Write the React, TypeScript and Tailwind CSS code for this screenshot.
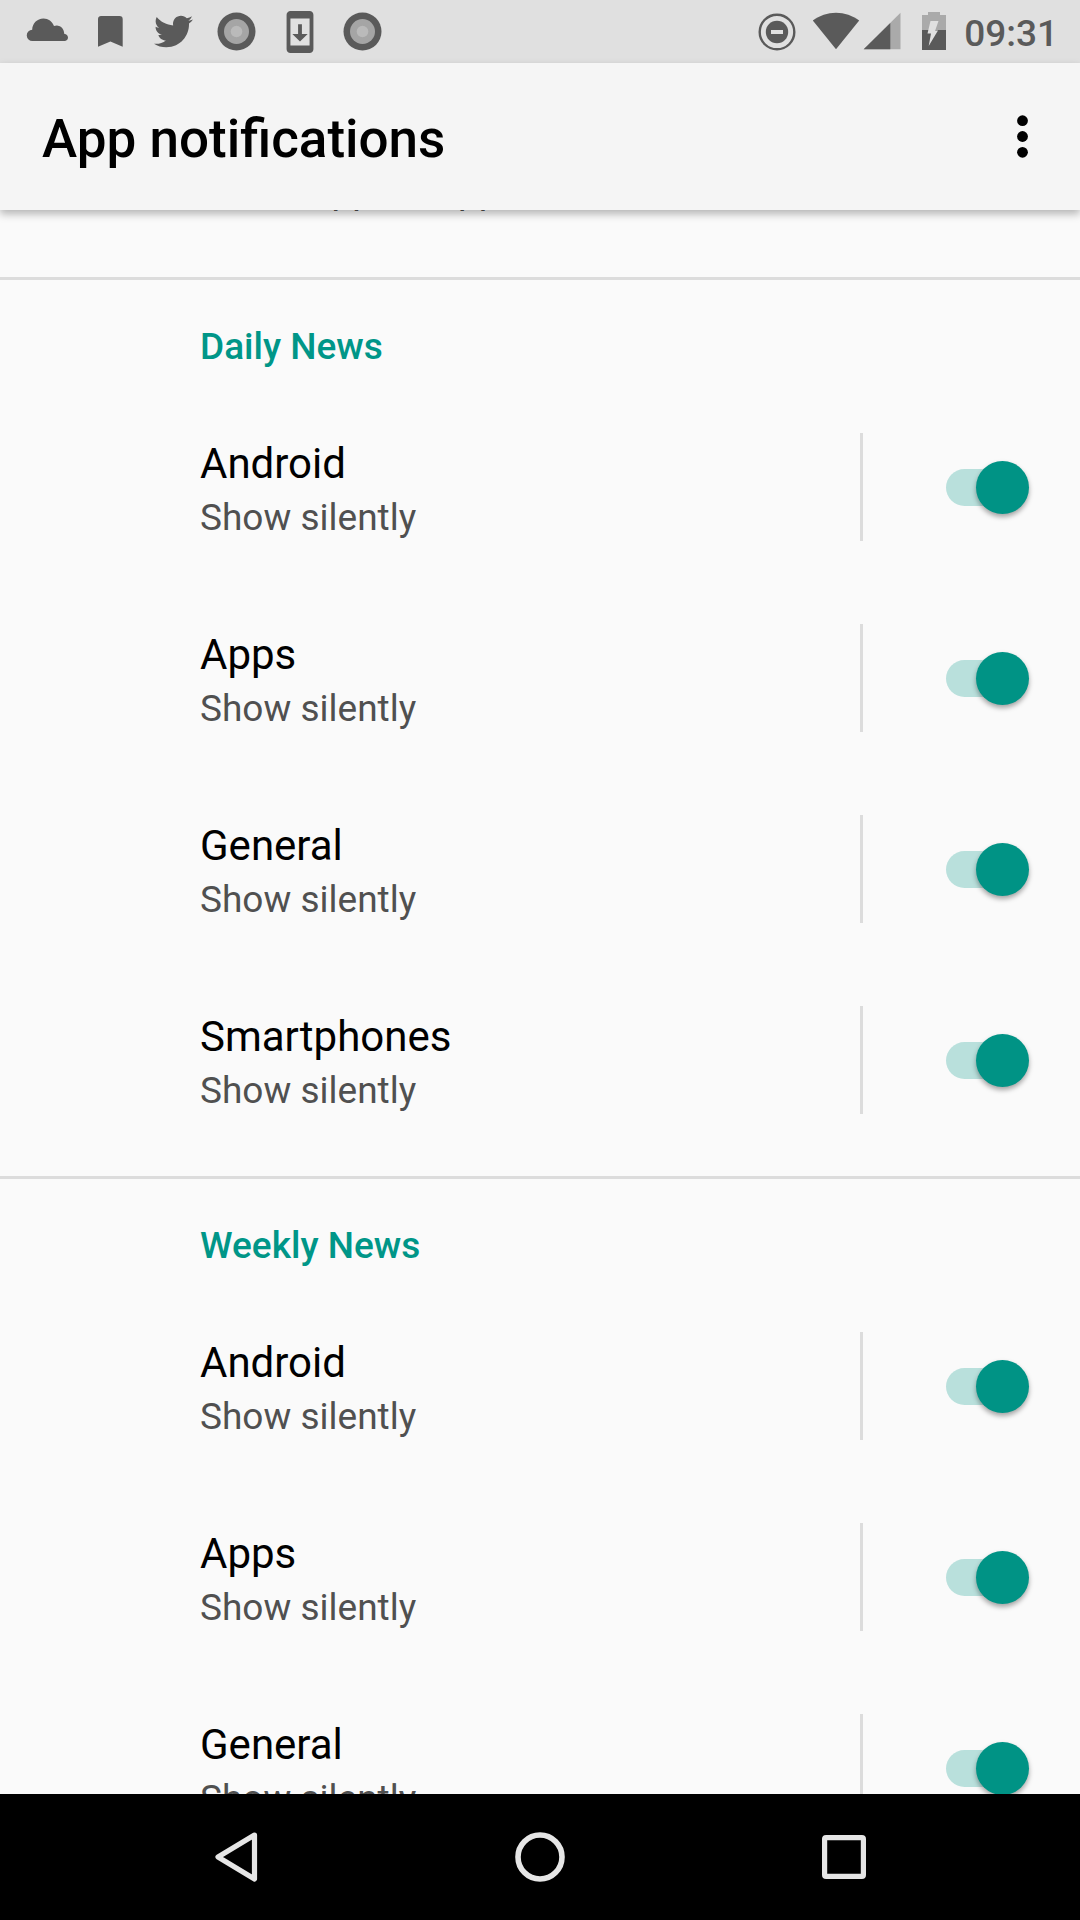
import { useLayoutEffect, useRef, useState } from 'react';
import { FaTwitter } from 'react-icons/fa';
import { MdSystemUpdate } from 'react-icons/md';

interface Channel {
  id: string;
  name: string;
}

interface ChannelGroup {
  title: string;
  channels: Channel[];
}

const groups: ChannelGroup[] = [
  {
    title: 'Daily News',
    channels: [
      { id: 'daily-android', name: 'Android' },
      { id: 'daily-apps', name: 'Apps' },
      { id: 'daily-general', name: 'General' },
      { id: 'daily-smartphones', name: 'Smartphones' },
    ],
  },
  {
    title: 'Weekly News',
    channels: [
      { id: 'weekly-android', name: 'Android' },
      { id: 'weekly-apps', name: 'Apps' },
      { id: 'weekly-general', name: 'General' },
      { id: 'weekly-smartphones', name: 'Smartphones' },
    ],
  },
];

// how far the list is scrolled under the app bar
const INITIAL_SCROLL = 44;

function CloudIcon() {
  return (
    <svg className="h-[63px] w-[63px]" viewBox="0 0 63 63" fill="currentColor">
      <path d="M16.5 41a5.6 5.6 0 0 1-.3-11.200C16.200 23.500 21 18.500 27.500 18.500c4.800 0 8.900 3 10.500 7.600 1.200-.4 2.500-.6 3.800-.4 3.600.5 6.400 3.600 6.400 8C50.500 34 52 35.600 52 37.500c0 2-1.500 3.500-3.600 3.500z" />
    </svg>
  );
}

function BookmarkIcon() {
  return (
    <svg className="h-[63px] w-[63px]" viewBox="0 0 63 63" fill="currentColor">
      <path d="M22 16h18.500a3.200 3.200 0 0 1 3.200 3.200V46.800L31.400 41.500 19 46.800V19.200A3.200 3.200 0 0 1 22 16z" />
    </svg>
  );
}

function DiscIcon() {
  return (
    <svg className="h-[63px] w-[63px]" viewBox="0 0 63 63">
      <circle cx="31.500" cy="31.500" r="19" fill="#5a5a5a" />
      <circle cx="31.500" cy="31.500" r="12.500" fill="#a5a5a5" />
      <circle cx="31.500" cy="31.500" r="5.800" fill="#bababa" />
    </svg>
  );
}

function DoNotDisturbIcon() {
  return (
    <svg className="h-[63px] w-[56px]" viewBox="0 0 56 63">
      <circle cx="27" cy="32" r="17.300" fill="none" stroke="#5a5a5a" strokeWidth="2.400" />
      <circle cx="27" cy="32" r="11.200" fill="#5a5a5a" />
      <path d="M21 30h12v4H21z" fill="#e0e0e0" />
    </svg>
  );
}

function WifiIcon() {
  return (
    <svg className="h-[63px] w-[56px]" viewBox="0 0 56 63" fill="#5a5a5a">
      <path d="M30 49.200 6.800 20.600C13.500 15.500 21.500 12.700 30 12.700s16.500 2.800 23.200 7.900z" />
    </svg>
  );
}

function SignalIcon() {
  return (
    <svg className="h-[63px] w-[52px]" viewBox="0 0 52 63">
      <path d="M1.700 49.200 38.500 12.800v36.400z" fill="#aaaaaa" />
      <path d="M1.700 49.200 28.300 22.900v26.300z" fill="#5a5a5a" />
    </svg>
  );
}

function BatteryIcon() {
  return (
    <svg className="h-[63px] w-[44px]" viewBox="0 0 44 63">
      <path d="M8 15h6v-3h12v3h6v15H8z" fill="#aaaaaa" />
      <path d="M8 30h24v20H8z" fill="#5a5a5a" />
      <path d="M16.500 21h8l-3.300 9.500H24L14.700 46l2.300-12.500h-3.500z" fill="#e0e0e0" />
    </svg>
  );
}

function StatusBar() {
  return (
    <div className="flex h-[63px] shrink-0 items-center justify-between bg-[#e0e0e0] pl-4 pr-[22px] text-[#5a5a5a]">
      <div className="flex items-center">
        <CloudIcon />
        <BookmarkIcon />
        <span className="flex w-[63px] justify-center">
          <FaTwitter size={39} />
        </span>
        <DiscIcon />
        <span className="flex w-[63px] justify-center">
          <MdSystemUpdate size={46} />
        </span>
        <DiscIcon />
      </div>
      <div className="flex items-center">
        <DoNotDisturbIcon />
        <WifiIcon />
        <SignalIcon />
        <BatteryIcon />
        <span className="pl-1.5 pt-1 text-[37px] font-medium leading-[50px]">09:31</span>
      </div>
    </div>
  );
}

function AppBar() {
  return (
    <header className="relative z-10 flex h-[147px] shrink-0 items-center justify-between bg-[#f5f5f5] pl-[42px] pr-[26px] shadow-[0_4px_8px_rgba(0,0,0,0.28)]">
      <h1 className="pt-1 text-[53px] font-medium leading-[62px] text-black">App notifications</h1>
      <button type="button" aria-label="More options" className="flex h-[63px] w-[63px] items-center justify-center">
        <svg className="h-[63px] w-[63px]" viewBox="0 0 63 63" fill="#000000">
          <circle cx="31.500" cy="15.700" r="5.400" />
          <circle cx="31.500" cy="31.500" r="5.400" />
          <circle cx="31.500" cy="47.300" r="5.400" />
        </svg>
      </button>
    </header>
  );
}

interface ChannelRowProps {
  channel: Channel;
  checked: boolean;
  onChange: (checked: boolean) => void;
}

function ChannelRow({ channel, checked, onChange }: ChannelRowProps) {
  return (
    <li className="flex h-[191px] items-center pl-[200px] pr-[51px]">
      <label htmlFor={channel.id} className="flex-1 pt-1.5">
        <span className="block text-[42px] leading-[56px] text-black">{channel.name}</span>
        <span className="block text-[37px] leading-[52px] text-[#505050]">Show silently</span>
      </label>
      <div className="flex h-[108px] items-start border-l-3 border-[#dcdcdc] pl-[83px] pt-7">
        <input
          id={channel.id}
          type="checkbox"
          role="switch"
          checked={checked}
          onChange={(e) => onChange(e.target.checked)}
          className="relative h-[53px] w-[83px] appearance-none before:absolute before:left-0 before:top-2 before:h-[37px] before:w-[74px] before:rounded-full before:bg-[#c4c4c4] after:absolute after:left-0 after:top-0 after:h-[53px] after:w-[53px] after:rounded-full after:bg-[#f1f1f1] after:shadow-[0_3px_5px_rgba(0,0,0,0.35)] checked:before:bg-[#b9e0dc] checked:after:left-[30px] checked:after:bg-[#009385]"
        />
      </div>
    </li>
  );
}

function NavigationBar() {
  return (
    <nav className="grid h-[126px] shrink-0 grid-cols-3 bg-black px-[84px]">
      <button type="button" aria-label="Back" className="flex items-center justify-center">
        <svg className="h-[60px] w-[60px]" viewBox="0 0 60 60" fill="none" stroke="#e6e6e6" strokeWidth="5.200" strokeLinejoin="round">
          <path d="M48.500 8 12 30l36.500 22z" />
        </svg>
      </button>
      <button type="button" aria-label="Home" className="flex items-center justify-center">
        <svg className="h-[60px] w-[60px]" viewBox="0 0 60 60" fill="none" stroke="#e6e6e6" strokeWidth="5.600">
          <circle cx="30" cy="30" r="22" />
        </svg>
      </button>
      <button type="button" aria-label="Recent apps" className="flex items-center justify-center">
        <svg className="h-[60px] w-[60px]" viewBox="0 0 60 60" fill="none" stroke="#e6e6e6" strokeWidth="5.200">
          <rect x="10.600" y="10.600" width="38.800" height="38.800" rx="1.500" />
        </svg>
      </button>
    </nav>
  );
}

export default function App() {
  const listRef = useRef<HTMLElement>(null);
  const [disabled, setDisabled] = useState<string[]>([]);

  useLayoutEffect(() => {
    if (listRef.current) {
      listRef.current.scrollTop = INITIAL_SCROLL;
    }
  }, []);

  const handleChange = (id: string, checked: boolean) => {
    setDisabled((prev) => (checked ? prev.filter((item) => item !== id) : [...prev, id]));
  };

  return (
    <div className="flex h-screen flex-col bg-[#fafafa] font-[Roboto,sans-serif]">
      <StatusBar />
      <AppBar />
      <main ref={listRef} className="min-h-0 flex-1 overflow-y-auto [scrollbar-width:none]">
        <p className="mb-[61px] pl-[200px] text-[37px] leading-[50px] text-[#505050]">Check app for app</p>
        {groups.map((group) => (
          <section key={group.title} className="border-t-3 border-[#dcdcdc] pb-[21px]">
            <h2 className="h-[111px] pl-[200px] pt-[42px] text-[37px] font-medium leading-[50px] text-[#009688]">
              {group.title}
            </h2>
            <ul>
              {group.channels.map((channel) => (
                <ChannelRow
                  key={channel.id}
                  channel={channel}
                  checked={!disabled.includes(channel.id)}
                  onChange={(checked) => handleChange(channel.id, checked)}
                />
              ))}
            </ul>
          </section>
        ))}
      </main>
      <NavigationBar />
    </div>
  );
}
